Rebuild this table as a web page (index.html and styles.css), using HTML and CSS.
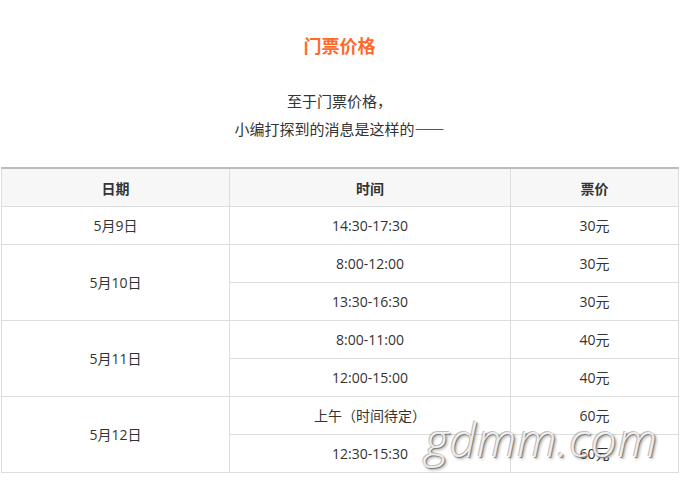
FILE: index.html
```html
<!DOCTYPE html>
<html lang="zh-CN">
<head>
<meta charset="utf-8">
<title>门票价格</title>
<link rel="stylesheet" href="styles.css">
</head>
<body>
<div class="article">
  <h2 class="title">门票价格</h2>
  <div class="intro">
    <p>至于门票价格，</p>
    <p>小编打探到的消息是这样的——</p>
  </div>
  <table class="price-table">
    <colgroup>
      <col class="c-date">
      <col class="c-time">
      <col class="c-price">
    </colgroup>
    <thead>
      <tr><th>日期</th><th>时间</th><th>票价</th></tr>
    </thead>
    <tbody>
      <tr><td>5月9日</td><td>14:30-17:30</td><td>30元</td></tr>
      <tr><td rowspan="2">5月10日</td><td>8:00-12:00</td><td>30元</td></tr>
      <tr><td>13:30-16:30</td><td>30元</td></tr>
      <tr><td rowspan="2">5月11日</td><td>8:00-11:00</td><td>40元</td></tr>
      <tr><td>12:00-15:00</td><td>40元</td></tr>
      <tr><td rowspan="2">5月12日</td><td>上午（时间待定）</td><td>60元</td></tr>
      <tr><td>12:30-15:30</td><td>60元</td></tr>
    </tbody>
  </table>
  <div class="watermark">gdmm.com</div>
</div>
</body>
</html>
```
FILE: styles.css
```css
html, body {
  margin: 0;
  padding: 0;
  background: #fff;
}
body {
  font-family: "Noto Sans CJK SC", "Noto Sans", sans-serif;
  color: #333;
}
.article {
  position: relative;
  width: 679px;
  height: 499px;
  padding-top: 33px;
  box-sizing: border-box;
}
.title {
  margin: 0;
  font-size: 18px;
  line-height: 24px;
  font-weight: bold;
  color: #ff6a2c;
  text-align: center;
}
.intro {
  margin-top: 30px;
  text-align: center;
  font-size: 15px;
  line-height: 28px;
}
.intro p {
  margin: 0;
}
.price-table {
  margin-top: 24px;
  margin-left: 1px;
  width: 677px;
  border-collapse: collapse;
  table-layout: fixed;
  font-family: "Open Sans", "Noto Sans CJK SC", sans-serif;
  font-size: 14px;
}
.c-date { width: 228px; }
.c-time { width: 281px; }
.c-price { width: 168px; }
.price-table th,
.price-table td {
  border: 1px solid #ddd;
  height: 37px;
  padding: 0;
  text-align: center;
  vertical-align: middle;
  line-height: 20px;
}
.price-table th {
  border-top: 2px solid #bbb;
  background: #f7f7f7;
  font-family: "Noto Sans CJK SC", sans-serif;
  font-weight: bold;
  height: 37px;
}
.watermark {
  position: absolute;
  left: 425px;
  top: 411px;
  font-family: "Open Sans", "DejaVu Sans", sans-serif;
  font-style: italic;
  font-weight: 300;
  font-size: 46px;
  line-height: 56px;
  letter-spacing: 1px;
  color: rgba(250, 250, 250, 0.9);
  text-shadow: 1px 1px 1px #777, 2px 2px 3px rgba(0,0,0,0.35), -1px -1px 0 rgba(150,150,150,0.6);
}
```
